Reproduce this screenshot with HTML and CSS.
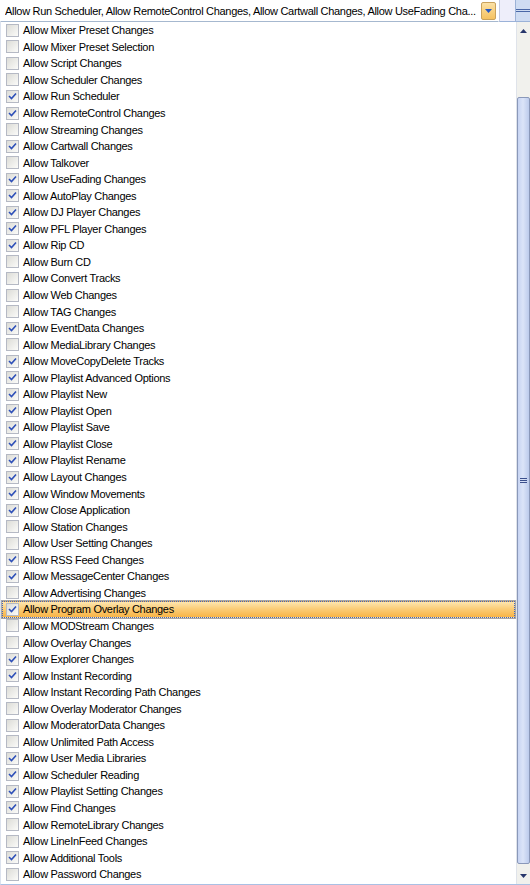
FILE: index.html
```html
<!DOCTYPE html>
<html lang="en">
<head>
  <meta charset="UTF-8">
  <title>Permissions</title>
  <link rel="stylesheet" href="styles.css">
</head>
<body>
  <div class="top">
    <div class="combo">
      <span class="combo-text">Allow Run Scheduler, Allow RemoteControl Changes, Allow Cartwall Changes, Allow UseFading Cha...</span>
      <div class="combo-btn">
        <svg viewBox="0 0 7 4" width="7" height="4"><path d="M0 0h7L3.5 4z" fill="#2457c5"/></svg>
      </div>
    </div>
    <div class="backdrop">
      <div class="pane-a"></div>
      <div class="pane-b"><i></i><i></i></div>
    </div>
  </div>

  <div class="dropdown">
    <ul class="list" id="list"></ul>
    <div class="scrollbar">
      <div class="sb-btn"><svg viewBox="0 0 7 4" width="7" height="4"><path d="M0 4h7L3.5 0z" fill="#27366b"/></svg></div>
      <div class="sb-track">
        <div class="sb-thumb"><span class="grip"><i></i><i></i><i></i></span></div>
      </div>
      <div class="sb-btn"><svg viewBox="0 0 7 4" width="7" height="4"><path d="M0 0h7L3.5 4z" fill="#27366b"/></svg></div>
    </div>
  </div>

  <script>
    // [label, checked]
    var items = [
      ['Mixer Preset Changes', 0], ['Mixer Preset Selection', 0], ['Script Changes', 0],
      ['Scheduler Changes', 0], ['Run Scheduler', 1], ['RemoteControl Changes', 1],
      ['Streaming Changes', 0], ['Cartwall Changes', 1], ['Talkover', 0],
      ['UseFading Changes', 1], ['AutoPlay Changes', 1], ['DJ Player Changes', 1],
      ['PFL Player Changes', 1], ['Rip CD', 1], ['Burn CD', 0], ['Convert Tracks', 0],
      ['Web Changes', 0], ['TAG Changes', 0], ['EventData Changes', 1],
      ['MediaLibrary Changes', 0], ['MoveCopyDelete Tracks', 1],
      ['Playlist Advanced Options', 1], ['Playlist New', 1], ['Playlist Open', 1],
      ['Playlist Save', 1], ['Playlist Close', 1], ['Playlist Rename', 1],
      ['Layout Changes', 1], ['Window Movements', 1], ['Close Application', 1],
      ['Station Changes', 0], ['User Setting Changes', 0], ['RSS Feed Changes', 1],
      ['MessageCenter Changes', 1], ['Advertising Changes', 0],
      ['Program Overlay Changes', 1], ['MODStream Changes', 0], ['Overlay Changes', 0],
      ['Explorer Changes', 1], ['Instant Recording', 1],
      ['Instant Recording Path Changes', 0], ['Overlay Moderator Changes', 0],
      ['ModeratorData Changes', 0], ['Unlimited Path Access', 0],
      ['User Media Libraries', 1], ['Scheduler Reading', 1],
      ['Playlist Setting Changes', 1], ['Find Changes', 1],
      ['RemoteLibrary Changes', 0], ['LineInFeed Changes', 0],
      ['Additional Tools', 1], ['Password Changes', 0]
    ];
    var hot = 'Program Overlay Changes';
    var tick = '<svg viewBox="0 0 9 9" width="9" height="9"><path d="M1 4l2.5 2.5L8 1.5" fill="none" stroke="#2d4fb8" stroke-width="1.6"/></svg>';

    var list = document.getElementById('list');
    items.forEach(function(it) {
      var li = document.createElement('li');
      li.className = 'row' + (it[0] === hot ? ' hot' : '');
      li.innerHTML = '<span class="box">' + (it[1] ? tick : '') + '</span>' +
                     '<span class="label">Allow ' + it[0] + '</span>';
      list.appendChild(li);
    });
  </script>
</body>
</html>
```

FILE: styles.css
```css
html, body {
  margin: 0;
  padding: 0;
}
body {
  width: 530px;
  height: 885px;
  overflow: hidden;
  background: #fff;
  font-family: 'Liberation Sans', Arial, sans-serif;
  font-size: 11px;
  letter-spacing: -0.3px;
  color: #000;
}

/* combo box on top */
.top {
  display: flex;
  height: 22px;
}
.combo {
  width: 499px;
  box-sizing: border-box;
  border: 1px solid #fff;
  border-bottom-color: #a6b8cf;
  display: flex;
  align-items: center;
  padding: 0 2px 0 4px;
  background: #fff;
}
.combo-text {
  flex: 1;
  white-space: nowrap;
  overflow: hidden;
}
.combo-btn {
  width: 13px;
  height: 16px;
  border: 1px solid #c9a25c;
  border-radius: 2px;
  background: linear-gradient(#fbe1a6, #f6c25f);
  display: flex;
  align-items: center;
  justify-content: center;
}
.backdrop {
  flex: 1;
  display: flex;
  border-left: 1px solid #c4cbe0;
  border-bottom: 1px solid #9bb2d8;
}
.pane-a {
  width: 15px;
  background: #eeeefa;
  border-right: 1px solid #9cb2d6;
}
.pane-b {
  flex: 1;
  background: #cfdcf2;
  display: flex;
  flex-direction: column;
  gap: 1px;
  padding-top: 9px;
}
.pane-b i {
  height: 1px;
  background: #4a67a6;
}

/* dropdown list */
.dropdown {
  display: flex;
  height: 862px;
  border-bottom: 1px solid #a9c0e4;
  border-left: 1px solid #dbe2ee;
}
.list {
  flex: 1;
  list-style: none;
  margin: 0;
  padding: 0 0 0 1px;
}
.row {
  height: 16.55px;
  display: flex;
  align-items: center;
  box-sizing: border-box;
  border: 1px solid transparent;
  margin-right: 1px;
}
.row.hot {
  border: 1px dotted #3d63c4;
  box-shadow: 0 0 0 1px #a7a7a7;
  background: linear-gradient(#fde6b0, #fbcd78 45%, #f7b447);
}
.box {
  width: 11px;
  height: 11px;
  margin: 0 4px 0 3px;
  border: 1px solid #b5b9c4;
  background: linear-gradient(135deg, #dcdcd7, #fbfbf9);
  display: flex;
  align-items: center;
  justify-content: center;
}
.label {
  white-space: nowrap;
}

/* vertical scrollbar */
.scrollbar {
  width: 13px;
  border-left: 1px solid #dfe3ea;
  background: #f1f1ed;
  display: flex;
  flex-direction: column;
}
.sb-btn {
  height: 17px;
  display: flex;
  align-items: center;
  justify-content: center;
}
.sb-track {
  flex: 1;
  display: flex;
  flex-direction: column;
  padding: 58px 0 3px;
}
.sb-thumb {
  flex: 1;
  border: 1px solid #8a98b9;
  border-radius: 2px;
  background: linear-gradient(90deg, #c7d4f2, #dbe4f8 45%, #bccbec);
  display: flex;
  align-items: center;
  justify-content: center;
}
.grip {
  display: flex;
  flex-direction: column;
  gap: 1px;
}
.grip i {
  width: 7px;
  height: 1px;
  background: #3b4f8c;
}
```
